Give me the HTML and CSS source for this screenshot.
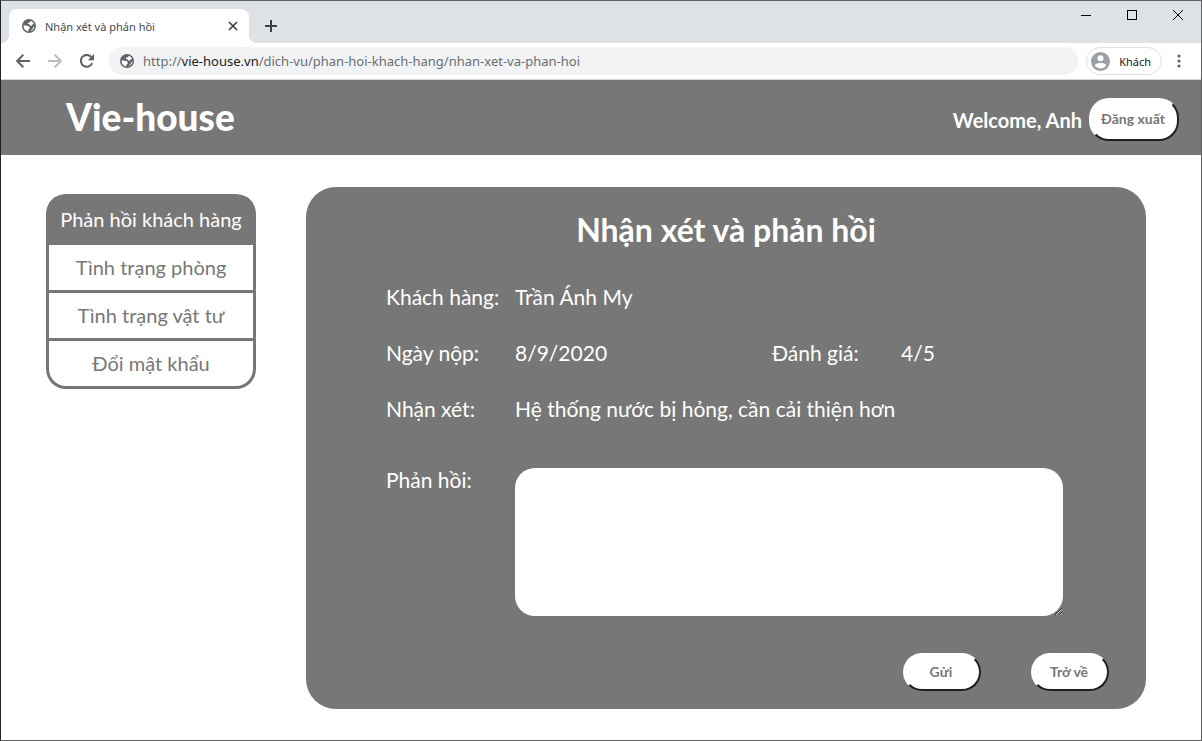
FILE: index.html
```html
<!DOCTYPE html>
<html lang="vi">
<head>
<meta charset="utf-8">
<title>Nhận xét và phản hồi</title>
<link rel="stylesheet" href="styles.css">
</head>
<body>
<svg class="sprite" aria-hidden="true">
  <symbol id="globe" viewBox="0 0 14 14">
    <circle cx="7" cy="7" r="7" fill="#5f6368"/>
    <path d="M1.600 6.300L5 6.700L7.400 7.600L8 9.200L6.800 10L6.200 12.500C3.500 12 1.600 9.900 1.600 7ZM8.600 1.700C10.200 2.200 11.500 3.400 12.100 5L10.600 5.200L10 6.700L8.200 6.600L7.400 5.300L5.600 4.700L6.300 3.400L8 3.300ZM12.400 7.200C12.300 9.300 11 11.200 9.100 12L9.400 10.800L10.600 10.200L10.900 8.400Z" fill="#fff"/>
  </symbol>
</svg>
<div class="window">
  <div class="tabstrip">
    <div class="tab">
      <svg class="globe"><use href="#globe"/></svg>
      <span class="tab-title">Nhận xét và phản hồi</span>
      <button class="icon-button" aria-label="Đóng thẻ"><svg width="10" height="10" viewBox="0 0 10 10" fill="none" stroke="#3c4043" stroke-width="1.700"><path d="M1 1L9 9M9 1L1 9"/></svg></button>
    </div>
    <button class="icon-button new-tab" aria-label="Thẻ mới"><svg width="12" height="12" viewBox="0 0 12 12" fill="none" stroke="#3c4043" stroke-width="2"><path d="M6 0V12M0 6H12"/></svg></button>
    <div class="window-controls">
      <button class="icon-button" aria-label="Thu nhỏ"><svg width="10" height="10" viewBox="0 0 10 10"><path d="M0 5H10V6H0Z"/></svg></button>
      <button class="icon-button" aria-label="Phóng to"><svg width="10" height="10" viewBox="0 0 10 10" fill="none" stroke="#000"><rect x=".5" y=".5" width="9" height="9"/></svg></button>
      <button class="icon-button" aria-label="Đóng"><svg width="10" height="10" viewBox="0 0 10 10" fill="none" stroke="#000"><path d="M0 0L10 10M10 0L0 10"/></svg></button>
    </div>
  </div>
  <div class="toolbar">
    <button class="icon-button" aria-label="Quay lại"><svg width="14" height="14" viewBox="0 0 14 14" fill="none" stroke="#5f6368" stroke-width="2"><path d="M14 7H1.500M7.300 .8L1.200 7L7.300 13.200"/></svg></button>
    <button class="icon-button" aria-label="Tiến"><svg width="14" height="14" viewBox="0 0 14 14" fill="none" stroke="#bbbdbf" stroke-width="2"><path d="M0 7H12.500M6.700 .8L12.800 7L6.700 13.200"/></svg></button>
    <button class="icon-button" aria-label="Tải lại"><svg width="14" height="14" viewBox="0 0 14 14"><path d="M12.200 9.200A5.900 5.900 0 1 1 11.300 3" fill="none" stroke="#5f6368" stroke-width="2"/><path d="M14 0V6.200H7.800Z" fill="#5f6368"/></svg></button>
    <div class="address">
      <svg class="globe"><use href="#globe"/></svg>
      <span>http://<span class="host">vie-house.vn</span>/dich-vu/phan-hoi-khach-hang/nhan-xet-va-phan-hoi</span>
    </div>
    <button class="profile">
      <svg width="19" height="19" viewBox="0 0 19 19"><circle cx="9.500" cy="9.500" r="9.500" fill="#9aa0a6"/><circle cx="9.500" cy="6.300" r="3" fill="#fff"/><path d="M3.600 13.300C4.500 11.500 7 10.900 9.500 10.900S14.500 11.500 15.400 13.300C14.100 15.300 12 16.400 9.500 16.400S4.900 15.300 3.600 13.300Z" fill="#fff"/></svg>
      Khách
    </button>
    <button class="icon-button menu" aria-label="Trình đơn"><svg width="4" height="14" viewBox="0 0 4 14" fill="#5f6368"><circle cx="2" cy="2" r="1.600"/><circle cx="2" cy="7" r="1.600"/><circle cx="2" cy="12" r="1.600"/></svg></button>
  </div>

  <header class="header">
    <h1 class="brand">Vie-house</h1>
    <div class="account">
      <span class="welcome">Welcome, Anh</span>
      <button class="button logout">Đăng xuất</button>
    </div>
  </header>

  <div class="page">
    <nav class="sidebar">
      <a class="link active" href="#phan-hoi">Phản hồi khách hàng</a>
      <a class="link" href="#phong">Tình trạng phòng</a>
      <a class="link" href="#vat-tu">Tình trạng vật tư</a>
      <a class="link" href="#mat-khau">Đổi mật khẩu</a>
    </nav>
    <main class="card">
      <h2 class="card-title">Nhận xét và phản hồi</h2>
      <form class="form">
        <span>Khách hàng:</span><span class="wide">Trần Ánh My</span>
        <span>Ngày nộp:</span><span>8/9/2020</span><span>Đánh giá:</span><span>4/5</span>
        <span>Nhận xét:</span><span class="wide">Hệ thống nước bị hỏng, cần cải thiện hơn</span>
        <label class="reply-label" for="reply">Phản hồi:</label><textarea class="reply wide" id="reply"></textarea>
      </form>
      <div class="actions">
        <button class="button">Gửi</button>
        <button class="button">Trở về</button>
      </div>
    </main>
  </div>
</div>
</body>
</html>
```
FILE: styles.css
```css
* {
  box-sizing: border-box;
}

body {
  margin: 0;
  background: #fff;
  font-family: Lato, sans-serif;
}

button {
  font-family: inherit;
}

.sprite {
  display: none;
}

.window {
  display: flex;
  flex-direction: column;
  min-height: 100vh;
  border: 1px solid #5f6062;
  border-left-color: #202124;
}

.tabstrip,
.toolbar {
  display: flex;
  align-items: center;
  font-family: "Noto Sans", "Open Sans", sans-serif;
}

.tabstrip {
  height: 42px;
  padding-left: 8px;
  background: #dee1e6;
}

.tab {
  display: flex;
  align-items: center;
  align-self: flex-end;
  position: relative;
  width: 240px;
  height: 34px;
  padding: 0 9px 0 13px;
  border-radius: 8px 8px 0 0;
  background: #fff;
}

.tab::before,
.tab::after {
  content: "";
  position: absolute;
  bottom: 0;
  width: 8px;
  height: 8px;
}

.tab::before {
  right: 100%;
  background: radial-gradient(circle at 0 0, transparent 8px, #fff 8px);
}

.tab::after {
  left: 100%;
  background: radial-gradient(circle at 100% 0, transparent 8px, #fff 8px);
}

.globe {
  flex: none;
  width: 14px;
  height: 14px;
}

.tab-title {
  flex: 1;
  margin-left: 9px;
  color: #45494d;
  font-size: 11px;
}

.icon-button {
  display: flex;
  align-items: center;
  justify-content: center;
  flex: none;
  width: 14px;
  height: 28px;
  padding: 0;
  border: 0;
  background: none;
}

.new-tab {
  align-self: flex-end;
  margin-left: 15px;
  height: 34px;
}

.window-controls {
  display: flex;
  align-self: flex-start;
  margin-left: auto;
}

.window-controls .icon-button {
  width: 46px;
}

.toolbar {
  height: 37px;
  padding: 0 15px;
  border-bottom: 1px solid #d5d6d8;
  gap: 18px;
}

.address {
  display: flex;
  align-items: center;
  flex: 1;
  height: 28px;
  margin-left: -3px;
  padding-left: 11px;
  border-radius: 14px;
  background: #f1f3f4;
  color: #6a6e72;
  font-size: 13px;
  gap: 9px;
}

.host {
  color: #202124;
}

.profile {
  display: flex;
  align-items: center;
  height: 28px;
  margin: 0 -4px 0 -10px;
  padding: 0 10px 0 4px;
  border: 1px solid #dfe1e5;
  border-radius: 14px;
  background: #fff;
  color: #202124;
  font-family: inherit;
  font-size: 11px;
  gap: 9px;
}

.menu {
  margin-left: -4px;
}

.header {
  display: flex;
  align-items: center;
  justify-content: space-between;
  min-height: 75px;
  padding: 0 22px 0 65px;
  background: #777;
  color: #fff;
}

.brand {
  margin: 0;
  padding-bottom: 3px;
  font-size: 37px;
  font-weight: 900;
}

.account {
  display: flex;
  align-items: center;
  padding-top: 4px;
  gap: 7px;
}

.welcome {
  font-size: 20px;
  font-weight: 700;
}

.button {
  width: 78px;
  height: 38px;
  padding: 0 2px 2px 0;
  border: 2px solid;
  border-color: #fff #202020 #202020 #fff;
  border-radius: 20px;
  background: #fff;
  color: #777;
  font-size: 14px;
  font-weight: 700;
}

.logout {
  width: 90px;
  height: 43px;
}

.page {
  display: flex;
  align-items: flex-start;
  padding: 32px 55px 30px 45px;
  gap: 50px;
}

.sidebar {
  display: flex;
  flex-direction: column;
  flex: none;
  width: 210px;
  margin-top: 7px;
  padding: 3px;
  border-radius: 20px;
  background: #777;
  gap: 3px;
  overflow: hidden;
}

.link {
  height: 45px;
  background: #fff;
  color: #777;
  font-size: 20px;
  line-height: 45px;
  text-align: center;
  text-decoration: none;
}

.link:last-child {
  border-radius: 0 0 17px 17px;
}

.active {
  background: #777;
  color: #fff;
}

.card {
  flex: 1;
  padding: 23px 37px 18px 80px;
  border-radius: 30px;
  background: #777;
  color: #fff;
}

.card-title {
  margin: 0 43px 29px 0;
  font-size: 32px;
  line-height: 40px;
  text-align: center;
}

.form {
  display: grid;
  grid-template-columns: 129fr 257fr 129fr 162fr;
  margin-right: 46px;
  font-size: 21px;
  line-height: 36px;
  row-gap: 20px;
}

.wide {
  grid-column: 2 / -1;
}

.reply-label {
  margin-top: 15px;
}

.reply {
  width: 100%;
  height: 148px;
  margin-top: 21px;
  padding: 12px;
  border: 0;
  border-radius: 20px;
  background: #fff;
  font: inherit;
}

.actions {
  display: flex;
  justify-content: flex-end;
  margin-top: 37px;
  gap: 50px;
}
```
